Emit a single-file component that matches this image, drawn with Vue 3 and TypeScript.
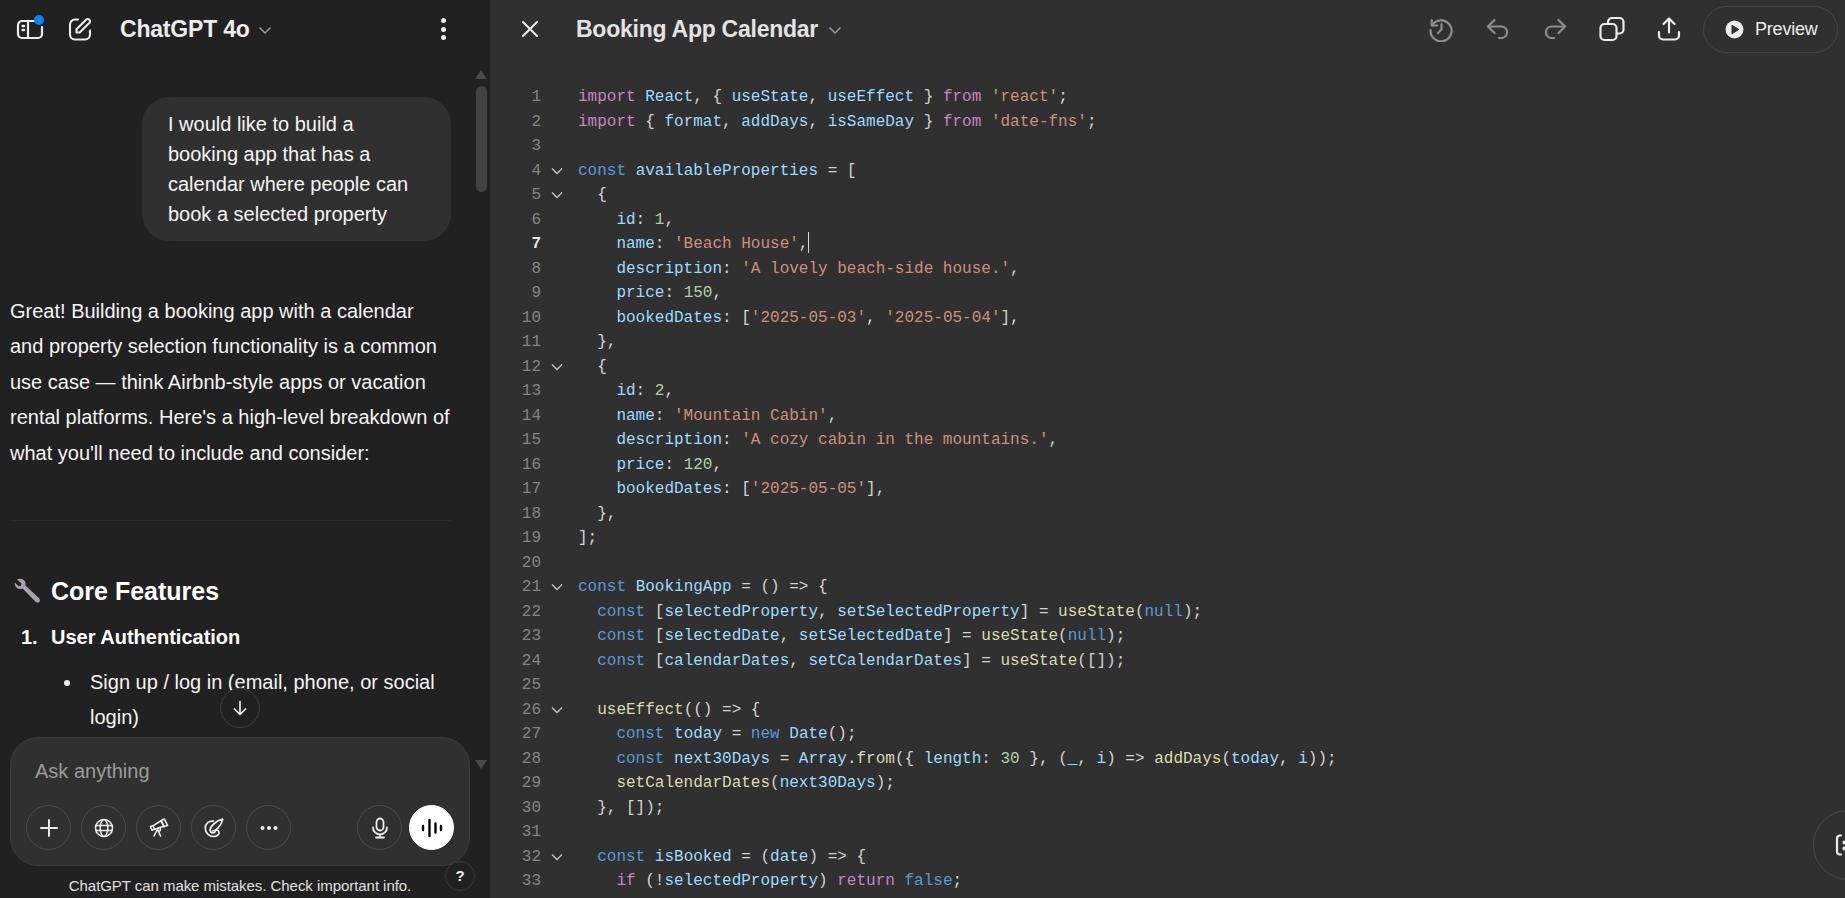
<script setup lang="ts">
const src: string[] = [
  "~kimport~ ~vReact~, { ~vuseState~, ~vuseEffect~ } ~kfrom~ ~s'react'~;",
  "~kimport~ { ~vformat~, ~vaddDays~, ~visSameDay~ } ~kfrom~ ~s'date-fns'~;",
  "",
  "~bconst~ ~vavailableProperties~ = [",
  "  {",
  "    ~vid~: ~n1~,",
  "    ~vname~: ~s'Beach House'~,",
  "    ~vdescription~: ~s'A lovely beach-side house.'~,",
  "    ~vprice~: ~n150~,",
  "    ~vbookedDates~: [~s'2025-05-03'~, ~s'2025-05-04'~],",
  "  },",
  "  {",
  "    ~vid~: ~n2~,",
  "    ~vname~: ~s'Mountain Cabin'~,",
  "    ~vdescription~: ~s'A cozy cabin in the mountains.'~,",
  "    ~vprice~: ~n120~,",
  "    ~vbookedDates~: [~s'2025-05-05'~],",
  "  },",
  "];",
  "",
  "~bconst~ ~vBookingApp~ = () => {",
  "  ~bconst~ [~vselectedProperty~, ~vsetSelectedProperty~] = ~fuseState~(~bnull~);",
  "  ~bconst~ [~vselectedDate~, ~vsetSelectedDate~] = ~fuseState~(~bnull~);",
  "  ~bconst~ [~vcalendarDates~, ~vsetCalendarDates~] = ~fuseState~([]);",
  "",
  "  ~fuseEffect~(() => {",
  "    ~bconst~ ~vtoday~ = ~bnew~ ~vDate~();",
  "    ~bconst~ ~vnext30Days~ = ~vArray~.~ffrom~({ ~vlength~: ~n30~ }, (~v_~, ~vi~) => ~faddDays~(~vtoday~, ~vi~));",
  "    ~fsetCalendarDates~(~vnext30Days~);",
  "  }, []);",
  "",
  "  ~bconst~ ~visBooked~ = (~vdate~) => {",
  "    ~kif~ (!~vselectedProperty~) ~kreturn~ ~bfalse~;",
  "    ~kreturn~ ~vselectedProperty~.~vbookedDates~.~fincludes~(~fformat~(~vdate~, ~s'yyyy-MM-dd'~));",
];

interface Tok { c: string; t: string }
const foldable = new Set([4, 5, 12, 21, 26, 32]);
const lines = src.map((s, idx) => ({
  n: idx + 1,
  fold: foldable.has(idx + 1),
  toks: s.split("~").map((part, i): Tok =>
    i % 2 ? { c: part[0], t: part.slice(1) } : { c: "p", t: part }),
}));
const tools = ["plus", "globe", "scope", "canvas", "more"];
</script>

<template>
  <div class="app">
    <aside class="left">
      <header class="lhead">
        <svg class="ic side" width="28" height="26" viewBox="0 0 28 26" fill="none" stroke="#ececec" stroke-width="2.2" stroke-linecap="round">
          <path d="M20 6H6a4 4 0 0 0-4 4v9a4 4 0 0 0 4 4h16a4 4 0 0 0 4-4v-7" />
          <path d="M12 6v17" />
          <path d="M6.5 11h1.5M6.5 15h1.5" stroke-width="2.4" />
          <circle cx="23" cy="5" r="5" fill="#0285ff" stroke="none" />
        </svg>
        <svg class="ic edit" width="24" height="24" viewBox="0 0 24 24" fill="none" stroke="#ececec" stroke-width="2.1" stroke-linecap="round" stroke-linejoin="round">
          <path d="M10 2.5H7a5 5 0 0 0-5 5v10a5 5 0 0 0 5 5h10a5 5 0 0 0 5-5v-4" />
          <path d="M8.5 15.5v-3.2L18.3 2.6a2 2 0 0 1 2.9 0l.3.3a2 2 0 0 1 0 2.9L11.7 15.5z" />
        </svg>
        <span class="model">ChatGPT 4o</span>
        <svg class="chev mchev" width="14" height="9" viewBox="0 0 14 9" fill="none" stroke="#9b9b9b" stroke-width="1.5"><path d="M1.5 1.5 7 7l5.500-5.500" /></svg>
        <span class="grow"></span>
        <span class="kebab"><i></i><i></i><i></i></span>
      </header>

      <div class="lbody">
        <div class="maincol">
          <div class="msgs">
            <div class="bubble">I would like to build a booking app that has a calendar where people can book a selected property</div>
            <p class="para">Great! Building a booking app with a calendar and property selection functionality is a common use case — think Airbnb-style apps or vacation rental platforms. Here's a high-level breakdown of what you'll need to include and consider:</p>
            <hr class="rule" />
            <h3 class="h3">
              <svg width="27" height="27" viewBox="0 0 27 27"><path fill="#a9a1ad" d="M3 1.500 7.500 5.500 7 7.800 4.800 8.300.8 4.500C.2 8 2.700 11.200 6.300 11c1 0 1.700-.3 2.300-.6l13 13.300c1 1 2.600 1.200 3.600.2s.9-2.600-.1-3.600L11.200 7.300c.3-.8.400-1.500.3-2.500C11.100 2 7 -.3 3 1.500z" /></svg>
              <span>Core Features</span>
            </h3>
            <div class="li1"><span class="num">1.</span><span>User Authentication</span></div>
            <div class="li2"><span class="dot"></span><span>Sign up / log in (email, phone, or social login)</span></div>
          </div>
          <button class="down">
            <svg width="18" height="18" viewBox="0 0 18 18" fill="none" stroke="#ececec" stroke-width="1.700" stroke-linecap="round" stroke-linejoin="round"><path d="M9 2.500v13M3.500 10 9 15.500 14.500 10" /></svg>
          </button>
          <div class="composer">
            <div class="ask">Ask anything</div>
            <div class="tools">
              <span v-for="t in tools" :key="t" class="tool">
                <svg v-if="t === 'plus'" width="22" height="22" viewBox="0 0 22 22" stroke="#ececec" stroke-width="2" stroke-linecap="round"><path d="M11 3v16M3 11h16" /></svg>
                <svg v-else-if="t === 'globe'" width="20" height="20" viewBox="0 0 20 20" fill="none" stroke="#ececec" stroke-width="1.600"><circle cx="10" cy="10" r="8.500" /><ellipse cx="10" cy="10" rx="3.800" ry="8.500" /><path d="M2 7.500h16M2 12.500h16" /></svg>
                <svg v-else-if="t === 'scope'" width="20" height="20" viewBox="0 0 20 20" fill="none" stroke="#ececec" stroke-width="1.600" stroke-linejoin="round" stroke-linecap="round"><path d="m1.500 8.500 2.500-.8 1.500 3.500-2.500 1zM4.200 7.600 12 2.800l2.800 5.500-9 3" /><path d="m12.300 2.500 3-1.500 3.300 6.300-3.500 1.500zM8.500 11l3 7M8.500 11l-3.500 7M8.500 11.500a1.500 1.500 0 1 0 0-.1" /></svg>
                <svg v-else-if="t === 'canvas'" width="20" height="20" viewBox="0 0 20 20" fill="none" stroke="#ececec" stroke-width="1.700" stroke-linecap="round" stroke-linejoin="round"><path d="M9.500 3.200C5.200 2.400 1.200 5.500 1.200 10c0 4.800 4 8.500 8.500 8.500 3 0 5.800-1.800 5.300-4.400-.3-1.700-2.200-2.500-3.700-1.600" /><path d="M6.200 11.500c0-2.200 1.500-3.700 3.500-5.500 2.500-2.300 5-4 9-4.800-.8 4-2.300 6.500-4.800 9-1.700 1.700-3.500 3-5.700 2.800" /><path d="M6.200 11.500c-.2 2.200 1 3.700 3 3.400 1.400-.2 2-1 2-2" /></svg>
                <svg v-else width="20" height="6" viewBox="0 0 20 6" fill="#ececec"><circle cx="3.500" cy="3" r="2" /><circle cx="10" cy="3" r="2" /><circle cx="16.500" cy="3" r="2" /></svg>
              </span>
              <span class="grow"></span>
              <span class="tool">
                <svg width="18" height="22" viewBox="0 0 18 22" fill="none" stroke="#ececec" stroke-width="1.800" stroke-linecap="round"><rect x="5.500" y="1.500" width="7" height="12" rx="3.500" /><path d="M2 10.500a7 7 0 0 0 14 0M9 17.500v3M5 20.500h8" /></svg>
              </span>
              <span class="tool voice">
                <svg width="22" height="20" viewBox="0 0 22 20" stroke="#000" stroke-width="2.400" stroke-linecap="round"><path d="M2 8v4M8.500 2v16M14.500 5.500v9M20 8v4" /></svg>
              </span>
            </div>
          </div>
          <div class="foot">ChatGPT can make mistakes. Check important info.</div>
          <span class="help">?</span>
        </div>
        <div class="sbar">
          <i class="up"></i>
          <b class="thumb"></b>
          <span class="grow"></span>
          <i class="dn"></i>
        </div>
      </div>
    </aside>

    <main class="right">
      <header class="rhead">
        <svg class="close" width="18" height="18" viewBox="0 0 18 18" stroke="#ececec" stroke-width="2" stroke-linecap="round"><path d="M2 2l14 14M16 2 2 16" /></svg>
        <span class="title">Booking App Calendar</span>
        <svg class="chev" width="14" height="9" viewBox="0 0 14 9" fill="none" stroke="#9b9b9b" stroke-width="1.500"><path d="M1.500 1.500 7 7l5.500-5.500" /></svg>
        <span class="grow"></span>
        <div class="actions">
          <svg class="act" width="26" height="26" viewBox="0 0 26 26" fill="none" stroke="#8e8e8e" stroke-width="2.200" stroke-linecap="round" stroke-linejoin="round"><path d="M3.800 4v5.500h5.500" /><path d="M4 9.500A10.500 10.500 0 1 1 2.600 14" /><path d="M13.500 8v5.500L10 17" /></svg>
          <svg class="act" width="26" height="26" viewBox="0 0 26 26" fill="none" stroke="#8e8e8e" stroke-width="2.200" stroke-linecap="round" stroke-linejoin="round"><path d="M9.500 4 3 10.500 9.500 17" /><path d="M3.500 10.500H17a5.800 5.800 0 0 1 0 11.500h-3" /></svg>
          <svg class="act" width="26" height="26" viewBox="0 0 26 26" fill="none" stroke="#8e8e8e" stroke-width="2.200" stroke-linecap="round" stroke-linejoin="round"><path d="M16.500 4 23 10.500 16.500 17" /><path d="M22.500 10.500H9a5.800 5.800 0 0 0 0 11.500h3" /></svg>
          <svg class="act" width="26" height="26" viewBox="0 0 26 26" fill="none" stroke="#ececec" stroke-width="2.200" stroke-linejoin="round"><rect x="1.500" y="8" width="16" height="16" rx="4" /><path d="M9 8V6a4 4 0 0 1 4-4h7.500a4 4 0 0 1 4 4v7.500a4 4 0 0 1-4 4h-3" /></svg>
          <svg class="act" width="26" height="26" viewBox="0 0 26 26" fill="none" stroke="#ececec" stroke-width="2.200" stroke-linecap="round" stroke-linejoin="round"><path d="M13 16.500V2.500M7.500 8 13 2.500 18.500 8" /><path d="M3 16v3.500a4 4 0 0 0 4 4h12a4 4 0 0 0 4-4V16" /></svg>
        </div>
        <button class="preview">
          <svg width="19" height="19" viewBox="0 0 19 19"><circle cx="9.500" cy="9.500" r="9" fill="#ececec" /><path d="M7 5.200v8.600l6.800-4.300z" fill="#303030" stroke="#303030" stroke-linejoin="round" /></svg>
          <span>Preview</span>
        </button>
      </header>

      <div class="code">
        <div v-for="l in lines" :key="l.n" class="line">
          <span class="ln" :class="{ act7: l.n === 7 }">{{ l.n }}</span>
          <span class="fold">
            <svg v-if="l.fold" width="12" height="8" viewBox="0 0 12 8" fill="none" stroke="#c5c5c5" stroke-width="1.300"><path d="M1 1.500l5 5 5-5" /></svg>
          </span>
          <span class="txt"><span v-for="(t, i) in l.toks" :key="i" :class="t.c">{{ t.t }}</span><span v-if="l.n === 7" class="caret"></span></span>
        </div>
      </div>

      <button class="fab">
        <svg width="24" height="24" viewBox="0 0 24 24" fill="none" stroke="#ececec" stroke-width="2.200" stroke-linecap="round"><path d="M6 2.500H5a3 3 0 0 0-3 3v13a3 3 0 0 0 3 3h1" /><path d="M9 9v1M9 15v1" stroke-width="2.800" /></svg>
      </button>
    </main>
  </div>
</template>

<style>
html, body { margin: 0; background: #303030; overflow: hidden; }
</style>

<style scoped>
.app { display: flex; width: 1845px; height: 898px; overflow: hidden; font-family: "Liberation Sans", Arial, sans-serif; color: #fff; position: relative; }
.grow { flex: 1; }
.left { width: 490px; flex: none; background: #212121; border-right: 1px solid #2e2e2e; display: flex; flex-direction: column; box-sizing: content-box; }
.lhead { height: 60px; flex: none; display: flex; align-items: center; padding: 0 44px 2px 17px; box-sizing: border-box; }
.side { margin-top: -2px; margin-right: 24px; margin-left: -1px; }
.edit { margin-right: 28px; }
.model { font-size: 23px; font-weight: 700; color: #ececec; letter-spacing: -.2px; }
.chev { margin-left: 10px; margin-top: 2px; }
.mchev { margin-left: 8px; }
.kebab { display: flex; flex-direction: column; gap: 3.500px; }
.kebab i { width: 5px; height: 5px; border-radius: 50%; background: #ececec; }
.lbody { flex: 1; min-height: 0; display: flex; }
.maincol { width: 475px; flex: none; display: flex; flex-direction: column; position: relative; }
.msgs { flex: 1; min-height: 0; overflow: hidden; padding: 37px 24px 0 10px; font-size: 20px; }
.bubble { margin-left: auto; width: 309px; box-sizing: border-box; background: #303030; border-radius: 27px; padding: 12px 26px; line-height: 30px; color: #f4f4f4; }
.para { margin: 53px 0 0; line-height: 35.4px; color: #f4f4f4; }
.rule { border: 0; height: 1px; background: #2b2b2b; margin: 49px 0 0; }
.h3 { margin: 54px 0 0 4px; height: 32px; font-size: 25px; font-weight: 700; line-height: 32px; display: flex; align-items: center; gap: 10px; }
.li1 { margin-top: 12px; padding-left: 11px; font-weight: 700; line-height: 36px; display: flex; }
.num { width: 30px; flex: none; }
.li2 { margin-top: 10px; line-height: 35px; display: flex; position: relative; padding-left: 80px; color: #f4f4f4; }
.dot { position: absolute; left: 54px; top: 15px; width: 6px; height: 6px; border-radius: 50%; background: #ececec; }
.down { position: absolute; left: 220px; top: 628px; width: 40px; height: 40px; border-radius: 50%; border: 1px solid #3d3d3d; background: #212121; padding: 0; display: flex; align-items: center; justify-content: center; }
.composer { flex: none; height: 129px; margin: 0 5px 0 10px; box-sizing: border-box; background: #303030; border: 1px solid #3a3a3a; border-radius: 28px; display: flex; flex-direction: column; padding: 0 15px; }
.ask { font-size: 20px; color: #9b9b9b; margin: 20px 0 0 9px; line-height: 26px; }
.tools { display: flex; gap: 10px; margin-top: 21px; }
.tool { width: 45px; height: 45px; box-sizing: border-box; border: 1px solid #4a4a4a; border-radius: 50%; display: flex; align-items: center; justify-content: center; flex: none; }
.tools .tool:nth-last-child(2) { margin-right: -3px; }
.voice { background: #fff; border-color: #fff; margin-left: 0; }
.foot { flex: none; height: 32px; font-size: 15px; line-height: 40px; text-align: center; color: #e0e0e0; width: 480px; letter-spacing: -.05px; }
.help { position: absolute; left: 445px; top: 801px; width: 30px; height: 30px; box-sizing: border-box; border: 1px solid #3d3d3d; border-radius: 50%; background: #212121; color: #ececec; font-size: 15px; font-weight: 700; line-height: 28px; text-align: center; }
.sbar { flex: none; width: 12px; margin-left: 0; display: flex; flex-direction: column; align-items: center; padding: 10px 0 129px; box-sizing: border-box; }
.up { width: 0; height: 0; border: 6px solid transparent; border-top: 0; border-bottom: 9px solid #4a4a4a; }
.dn { width: 0; height: 0; border: 6px solid transparent; border-bottom: 0; border-top: 9px solid #4a4a4a; }
.thumb { display: block; width: 11px; height: 106px; background: #424242; border-radius: 6px; margin-top: 7px; }
.right { flex: 1; min-width: 0; background: #303030; position: relative; display: flex; flex-direction: column; }
.rhead { height: 60px; flex: none; display: flex; align-items: center; padding: 0 7px 2px 30px; box-sizing: border-box; }
.close { margin-right: 37px; }
.title { font-size: 23px; font-weight: 700; color: #e3e3e3; letter-spacing: -.25px; }
.actions { display: flex; gap: 31px; margin-right: 21px; }
.preview { width: 135px; height: 47px; border: 1px solid #464646; border-radius: 24px; background: transparent; color: #ececec; font: 18px "Liberation Sans", Arial, sans-serif; display: flex; align-items: center; gap: 11px; padding: 0 0 0 21px; box-sizing: border-box; letter-spacing: -.2px; }
.code { flex: 1; min-height: 0; overflow: hidden; padding-top: 25px; font: 16px/24.5px "Liberation Mono", "Courier New", monospace; color: #d4d4d4; }
.line { display: flex; height: 24.5px; white-space: pre; }
.ln { width: 50px; text-align: right; color: #858585; flex: none; }
.act7 { color: #e8e8e8; font-weight: 700; }
.fold { width: 37px; flex: none; display: flex; align-items: center; padding-left: 10px; box-sizing: border-box; }
.txt { position: relative; }
.caret { display: inline-block; width: 1px; height: 21px; background: #d8d8d8; vertical-align: -5px; }
.k { color: #c586c0; }
.b { color: #569cd6; }
.v { color: #9cdcfe; }
.s { color: #ce9178; }
.n { color: #b5cea8; }
.f { color: #dcdcaa; }
.p { color: #d4d4d4; }
.fab { position: absolute; left: 1322px; top: 810px; width: 70px; height: 70px; border-radius: 50%; background: #303030; border: 1px solid #4a4a4a; padding: 0 0 0 21px; box-sizing: border-box; display: flex; align-items: center; }
</style>
